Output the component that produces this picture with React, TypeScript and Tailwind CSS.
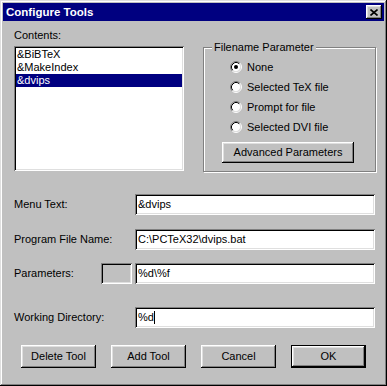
const raised =
  'shadow-[inset_-1px_-1px_0_#000,inset_1px_1px_0_#fff,inset_-2px_-2px_0_#808080,inset_2px_2px_0_#dfdfdf]';
const sunken =
  'shadow-[inset_1px_1px_0_#808080,inset_-1px_-1px_0_#fff,inset_2px_2px_0_#000,inset_-2px_-2px_0_#dfdfdf]';

const ITEMS = ['&BiBTeX', '&MakeIndex', '&dvips'];
const RADIOS = ['None', 'Selected TeX file', 'Prompt for file', 'Selected DVI file'];

function Radio({ checked }: { checked?: boolean }) {
  return (
    <svg width="12" height="12" viewBox="0 0 12 12" className="shrink-0">
      <circle cx="6" cy="6" r="4.5" fill="#fff" />
      <path d="M2.11 9.89 A5.5 5.5 0 0 1 9.89 2.11" fill="none" stroke="#808080" />
      <path d="M9.89 2.11 A5.5 5.5 0 0 1 2.11 9.89" fill="none" stroke="#fff" />
      <path d="M2.82 9.18 A4.5 4.5 0 0 1 9.18 2.82" fill="none" stroke="#000" />
      <path d="M9.18 2.82 A4.5 4.5 0 0 1 2.82 9.18" fill="none" stroke="#dfdfdf" />
      {checked && <circle cx="6" cy="6" r="2" fill="#000" />}
    </svg>
  );
}

function Field({ value, caret }: { value: string; caret?: boolean }) {
  return (
    <div className={`w-[240px] h-[21px] bg-white ${sunken} flex items-center pl-[3px]`}>
      <span>{value}</span>
      {caret && <span className="w-[1px] h-[13px] bg-black" />}
    </div>
  );
}

function Button({ label, isDefault }: { label: string; isDefault?: boolean }) {
  if (isDefault) {
    return (
      <div className="w-[75px] h-[23px] border border-black">
        <div className={`w-full h-full ${raised} flex items-center justify-center`}>{label}</div>
      </div>
    );
  }
  return (
    <div className={`w-[75px] h-[23px] ${raised} flex items-center justify-center`}>{label}</div>
  );
}

export default function App() {
  return (
    <div
      className={`w-[387px] h-[386px] bg-[#c0c0c0] p-[3px] text-[11px] leading-[13px] text-black font-['Liberation_Sans',Arial,sans-serif] select-none shadow-[inset_-1px_-1px_0_#000,inset_1px_1px_0_#dfdfdf,inset_-2px_-2px_0_#808080,inset_2px_2px_0_#fff]`}
    >
      <div className="h-[18px] bg-[#000080] flex items-center justify-between pl-[3px] pr-[2px]">
        <span className="text-white font-bold text-[11.5px]">Configure Tools</span>
        <div className={`w-[16px] h-[14px] bg-[#c0c0c0] ${raised} flex items-center justify-center`}>
          <svg width="8" height="7" viewBox="0 0 8 7">
            <path d="M0.5 0.5 L7.5 6.5 M7.5 0.5 L0.5 6.5" stroke="#000" strokeWidth="1.6" />
          </svg>
        </div>
      </div>

      <div className="pl-[11px] pr-[8px] pt-[8px]">
        <div className="flex gap-[19px]">
          <div className="w-[170px]">
            <div className="h-[13px] mb-[4px]">Contents:</div>
            <div className={`h-[125px] bg-white ${sunken} p-[2px]`}>
              {ITEMS.map((item, i) => (
                <div
                  key={item}
                  className={`h-[13px] pl-[1px] ${i === 2 ? 'bg-[#000080] text-white' : ''}`}
                >
                  {item}
                </div>
              ))}
            </div>
          </div>

          <div className="relative mt-[18px] w-[173px] h-[125px] border border-[#808080] shadow-[inset_1px_1px_0_#fff,1px_1px_0_#fff] pt-[9px]">
            <span className="absolute -top-[7px] left-[8px] px-[2px] bg-[#c0c0c0]">Filename Parameter</span>
            {RADIOS.map((r, i) => (
              <div key={r} className="h-[20px] flex items-center gap-[5px] pl-[26px]">
                <Radio checked={i === 0} />
                <span>{r}</span>
              </div>
            ))}
            <div className={`mt-[5px] ml-[18px] w-[132px] h-[21px] ${raised} flex items-center justify-center`}>
              Advanced Parameters
            </div>
          </div>
        </div>

        <div className="mt-[22px] flex flex-col">
          <div className="flex items-center">
            <span className="w-[121px]">Menu Text:</span>
            <Field value="&dvips" />
          </div>
          <div className="flex items-center mt-[14px]">
            <span className="w-[121px]">Program File Name:</span>
            <Field value="C:\PCTeX32\dvips.bat" />
          </div>
          <div className="flex items-center mt-[13px]">
            <span className="w-[87px]">Parameters:</span>
            <div className={`w-[31px] h-[21px] ${sunken} mr-[3px]`} />
            <Field value="%d\%f" />
          </div>
          <div className="flex items-center mt-[23px]">
            <span className="w-[121px]">Working Directory:</span>
            <Field value="%d" caret />
          </div>
        </div>

        <div className="mt-[17px] pl-[7px] flex gap-[15px]">
          <Button label="Delete Tool" />
          <Button label="Add Tool" />
          <Button label="Cancel" />
          <Button label="OK" isDefault />
        </div>
      </div>
    </div>
  );
}
